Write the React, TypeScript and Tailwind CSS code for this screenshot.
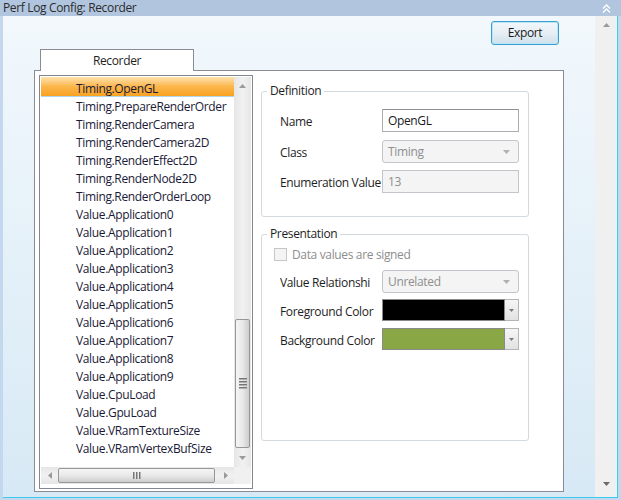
import React from "react";

const items = [
  "Timing.OpenGL",
  "Timing.PrepareRenderOrder",
  "Timing.RenderCamera",
  "Timing.RenderCamera2D",
  "Timing.RenderEffect2D",
  "Timing.RenderNode2D",
  "Timing.RenderOrderLoop",
  "Value.Application0",
  "Value.Application1",
  "Value.Application2",
  "Value.Application3",
  "Value.Application4",
  "Value.Application5",
  "Value.Application6",
  "Value.Application7",
  "Value.Application8",
  "Value.Application9",
  "Value.CpuLoad",
  "Value.GpuLoad",
  "Value.VRamTextureSize",
  "Value.VRamVertexBufSize",
];

function Tri({ dir, color = "#8a8a8a" }: { dir: "up" | "down" | "left" | "right"; color?: string }) {
  const pts: Record<string, string> = {
    up: "0,4 7,4 3.5,0",
    down: "0,0 7,0 3.5,4",
    left: "4,0 4,7 0,3.5",
    right: "0,0 0,7 4,3.5",
  };
  const vertical = dir === "up" || dir === "down";
  return (
    <svg width={vertical ? 7 : 4} height={vertical ? 4 : 7} viewBox={vertical ? "0 0 7 4" : "0 0 4 7"}>
      <polygon points={pts[dir]} fill={color} />
    </svg>
  );
}

function Row({ label, children, className = "" }: { label: string; children: React.ReactNode; className?: string }) {
  return (
    <div className={"flex items-center pl-[18px] " + className}>
      <div className="w-[102px] pt-[3px] whitespace-nowrap overflow-hidden text-[#1e1e1e]">{label}</div>
      {children}
    </div>
  );
}

function DisabledSelect({ value }: { value: string }) {
  return (
    <div className="w-[137px] h-[23px] rounded-[3px] border border-[#c2c6ca] bg-[#f4f4f4] flex items-center justify-between pl-[5px] pr-[8px] text-[#8e8e8e]">
      <span>{value}</span>
      <Tri dir="down" color="#b0b0b0" />
    </div>
  );
}

function ColorPick({ color }: { color: string }) {
  return (
    <div className="w-[137px] h-[22px] flex">
      <div className="w-[123px] h-full border border-[#8a8a8a]" style={{ backgroundColor: color }} />
      <div className="w-[14px] h-full border border-l-0 border-[#b5b5b5] bg-gradient-to-b from-[#f6f6f6] to-[#e2e2e2] flex items-center justify-center">
        <svg width="5" height="3" viewBox="0 0 5 3">
          <polygon points="0,0 5,0 2.5,3" fill="#7a7a7a" />
        </svg>
      </div>
    </div>
  );
}

export default function App() {
  return (
    <div className="w-[621px] h-[500px] overflow-hidden flex flex-col bg-[#c3d8ee] font-['Open_Sans','Noto_Sans',sans-serif] text-[12px] leading-[16px] tracking-[-0.35px]">
      {/* title bar */}
      <div className="h-[16px] bg-[#b1c5de] flex items-center justify-between pl-[3px] pr-[10px] text-[#2c2c2c]">
        <span>Perf Log Config: Recorder</span>
        <svg width="9" height="9" viewBox="0 0 9 9">
          <polyline points="1,4.5 4.5,1 8,4.5" fill="none" stroke="#ffffff" strokeWidth="1.4" />
          <polyline points="1,8.5 4.5,5 8,8.5" fill="none" stroke="#ffffff" strokeWidth="1.4" />
        </svg>
      </div>

      {/* body */}
      <div className="flex h-[482px]">
        <div className="w-[3px] bg-[#c3d8ee]" />
        <div className="w-[615px] h-[482px] flex border-r border-b border-[#3ccbea]">
          {/* content */}
          <div className="w-[592px] h-full bg-gradient-to-b from-[#f2f8fc] to-[#d7e9f5] pl-[31px] pt-[5px] flex flex-col">
            <div className="w-[530px] flex justify-end pr-[5px]">
              <div className="w-[68px] h-[24px] rounded-[3px] border border-[#3a9fd0] shadow-[inset_0_0_0_1px_#b8e8f8] bg-gradient-to-b from-[#f2f7fa] via-[#e6eff5] to-[#d0e0eb] flex items-center justify-center text-[#1a1a1a]">
                Export
              </div>
            </div>

            {/* tab header */}
            <div className="mt-[4px] ml-[6px] w-[154px] h-[22px] -mb-px relative z-10 bg-white border border-b-0 border-[#898c95] flex items-center justify-center text-[#1e1e1e]">
              Recorder
            </div>

            {/* tab panel */}
            <div className="w-[530px] h-[422px] border border-[#898c95] bg-white p-[4px] flex">
              {/* listbox */}
              <div className="w-[214px] h-[414px] border border-[#828790] pt-[1px] pl-[1px] pr-[1px] pb-[4px] flex flex-col">
                <div className="flex h-[390px]">
                  <div className="w-[193px] h-full overflow-hidden pt-[2px] text-[#1a1a36]">
                    {items.map((it, i) =>
                      i === 0 ? (
                        <div
                          key={it}
                          className="-mt-[2px] h-[20px] pt-[4px] pl-[35px] flex items-center whitespace-nowrap bg-gradient-to-b from-[#fee2ab] via-[#fbb649] to-[#f8a21f] border-b border-[#b0d6ef]"
                        >
                          {it}
                        </div>
                      ) : (
                        <div key={it} className="h-[18px] pt-[2px] pl-[35px] flex items-center whitespace-nowrap">
                          {it}
                        </div>
                      )
                    )}
                  </div>
                  {/* vertical scrollbar */}
                  <div className="w-[17px] h-full flex flex-col bg-gradient-to-r from-[#e6e6e6] via-[#f1f1f1] to-[#e6e6e6]">
                    <div className="h-[17px] flex items-center justify-center">
                      <Tri dir="up" color="#9a9a9a" />
                    </div>
                    <div className="h-[225px]" />
                    <div className="mx-[1px] w-[15px] h-[129px] rounded-[2px] border border-[#979797] bg-gradient-to-r from-[#f5f5f5] via-[#e9e9e9] to-[#cdcdcd] flex items-center justify-center">
                      <div className="w-[8px] flex flex-col gap-[1px]">
                        <div className="h-[2px] bg-gradient-to-b from-[#5a5a5a] to-[#d0d0d0]" />
                        <div className="h-[2px] bg-gradient-to-b from-[#5a5a5a] to-[#d0d0d0]" />
                        <div className="h-[2px] bg-gradient-to-b from-[#5a5a5a] to-[#d0d0d0]" />
                        <div className="h-[2px] bg-gradient-to-b from-[#5a5a5a] to-[#d0d0d0]" />
                      </div>
                    </div>
                    <div className="flex-1 flex items-center justify-center">
                      <Tri dir="down" color="#9a9a9a" />
                    </div>
                  </div>
                </div>
                <div className="flex h-[17px]">
                  {/* horizontal scrollbar */}
                  <div className="w-[193px] h-full flex bg-gradient-to-b from-[#e6e6e6] via-[#f1f1f1] to-[#e6e6e6]">
                    <div className="w-[17px] flex items-center justify-center">
                      <Tri dir="left" color="#9a9a9a" />
                    </div>
                    <div className="w-[157px] my-[1px] rounded-[2px] border border-[#979797] bg-gradient-to-b from-[#f5f5f5] via-[#e9e9e9] to-[#cdcdcd] flex items-center justify-center">
                      <div className="h-[7px] flex gap-[1px]">
                        <div className="w-[2px] bg-gradient-to-r from-[#5a5a5a] to-[#d0d0d0]" />
                        <div className="w-[2px] bg-gradient-to-r from-[#5a5a5a] to-[#d0d0d0]" />
                        <div className="w-[2px] bg-gradient-to-r from-[#5a5a5a] to-[#d0d0d0]" />
                      </div>
                    </div>
                    <div className="w-[2px]" />
                    <div className="w-[17px] flex items-center justify-center">
                      <Tri dir="right" color="#9a9a9a" />
                    </div>
                  </div>
                  <div className="w-[17px] h-full bg-[#f0f0f0]" />
                </div>
              </div>

              {/* right column */}
              <div className="ml-[8px] w-[268px] flex flex-col pt-[16px]">
                {/* Definition */}
                <div className="h-[126px] rounded-[3px] border border-[#d2dadf]">
                  <div className="-mt-[9px] ml-[5px] w-fit bg-white px-[3px] text-[#1e1e1e]">Definition</div>
                  <Row label="Name" className="mt-[10px]">
                    <div className="w-[137px] h-[23px] border border-[#abadb3] border-t-[#8e9198] bg-white flex items-center pl-[5px] text-[#1a1a1a]">
                      OpenGL
                    </div>
                  </Row>
                  <Row label="Class" className="mt-[8px]">
                    <DisabledSelect value="Timing" />
                  </Row>
                  <Row label="Enumeration Value" className="mt-[7px]">
                    <div className="w-[137px] h-[23px] border border-[#c2c6ca] bg-[#f4f4f4] flex items-center pl-[5px] text-[#8e8e8e]">
                      13
                    </div>
                  </Row>
                </div>

                {/* Presentation */}
                <div className="mt-[17px] h-[207px] rounded-[3px] border border-[#d2dadf]">
                  <div className="-mt-[9px] ml-[5px] w-fit bg-white px-[3px] text-[#1e1e1e]">Presentation</div>
                  <div className="mt-[6px] ml-[12px] flex items-center h-[13px]">
                    <div className="w-[13px] h-[13px] border border-[#c6c6c6] bg-[#f4f4f4]" />
                    <span className="ml-[5px] text-[#8e8e8e]">Data values are signed</span>
                  </div>
                  <Row label="Value Relationshi" className="mt-[9px]">
                    <DisabledSelect value="Unrelated" />
                  </Row>
                  <Row label="Foreground Color" className="mt-[6px]">
                    <ColorPick color="#000000" />
                  </Row>
                  <Row label="Background Color" className="mt-[7px]">
                    <ColorPick color="#8aa745" />
                  </Row>
                </div>
              </div>
            </div>
          </div>

          {/* outer vertical scrollbar */}
          <div className="w-[22px] h-full bg-[#f0f0f0] flex flex-col justify-between items-center pt-[7px] pb-[11px]">
            <Tri dir="up" color="#9a9a9a" />
            <Tri dir="down" color="#6a6a6a" />
          </div>
        </div>
        <div className="w-[3px] bg-[#c3d8ee]" />
      </div>
    </div>
  );
}
